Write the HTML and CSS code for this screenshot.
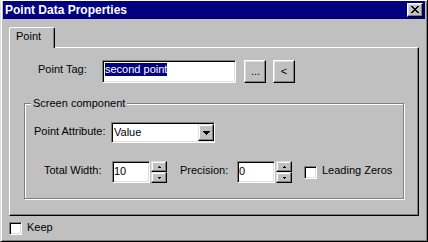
FILE: index.html
```html
<!DOCTYPE html>
<html>
<head>
<meta charset="utf-8">
<title>Point Data Properties</title>
<link rel="stylesheet" href="styles.css">
</head>
<body>
<div class="window">
	<div class="titlebar">
		<span class="title">Point Data Properties</span>
		<span class="close-btn">
			<svg width="8" height="7" viewBox="0 0 8 7">
				<rect x="0" y="0" width="2" height="1"/><rect x="6" y="0" width="2" height="1"/>
				<rect x="1" y="1" width="2" height="1"/><rect x="5" y="1" width="2" height="1"/>
				<rect x="2" y="2" width="4" height="1"/>
				<rect x="3" y="3" width="2" height="1"/>
				<rect x="2" y="4" width="4" height="1"/>
				<rect x="1" y="5" width="2" height="1"/><rect x="5" y="5" width="2" height="1"/>
				<rect x="0" y="6" width="2" height="1"/><rect x="6" y="6" width="2" height="1"/>
			</svg>
		</span>
	</div>
	<div class="client">
		<div class="tab">Point</div>
		<div class="panel">
			<div class="tag-row">
				<span class="lbl lbl-tag">Point Tag:</span>
				<div class="field field-tag"><span class="sel">second point</span></div>
				<span class="btn btn-browse">...</span>
				<span class="btn">&lt;</span>
			</div>
			<div class="group">
				<div class="group-title">Screen component</div>
				<div class="attr-row">
					<span class="lbl lbl-attr">Point Attribute:</span>
					<div class="combo">
						<span class="combo-text">Value</span>
						<span class="combo-btn">
							<svg width="7" height="4" viewBox="0 0 7 4">
								<rect x="0" y="0" width="7" height="1"/><rect x="1" y="1" width="5" height="1"/>
								<rect x="2" y="2" width="3" height="1"/><rect x="3" y="3" width="1" height="1"/>
							</svg>
						</span>
					</div>
				</div>
				<div class="spin-row">
					<span class="lbl lbl-width">Total Width:</span>
					<div class="field field-num">10</div>
					<div class="spin">
						<span class="spin-btn"><svg width="3" height="2" viewBox="0 0 3 2"><rect x="1" y="0" width="1" height="1"/><rect x="0" y="1" width="3" height="1"/></svg></span>
						<span class="spin-btn"><svg width="3" height="2" viewBox="0 0 3 2"><rect x="0" y="0" width="3" height="1"/><rect x="1" y="1" width="1" height="1"/></svg></span>
					</div>
					<span class="lbl lbl-prec">Precision:</span>
					<div class="field field-num">0</div>
					<div class="spin">
						<span class="spin-btn"><svg width="3" height="2" viewBox="0 0 3 2"><rect x="1" y="0" width="1" height="1"/><rect x="0" y="1" width="3" height="1"/></svg></span>
						<span class="spin-btn"><svg width="3" height="2" viewBox="0 0 3 2"><rect x="0" y="0" width="3" height="1"/><rect x="1" y="1" width="1" height="1"/></svg></span>
					</div>
					<span class="check check-zeros"></span>
					<span class="lbl">Leading Zeros</span>
				</div>
			</div>
		</div>
		<div class="keep-row">
			<span class="check"></span>
			<span class="lbl lbl-keep">Keep</span>
		</div>
	</div>
</div>
</body>
</html>
```

FILE: styles.css
```css
*{ margin:0; padding:0; box-sizing:border-box;}
html, body{ background:#c0c0c0;}
body{ font:11px/13px "Liberation Sans", Arial, sans-serif; color:#000;}
svg{ display:block; shape-rendering:crispEdges;}

/* window frame */
.window{ width:428px; height:242px; padding:1px 2px 2px; border-left:1px solid #dfdfdf; border-right:1px solid #000; border-bottom:1px solid #000; box-shadow:inset 1px 1px #fff, inset -1px -1px #808080;}
.titlebar{ display:flex; align-items:center; height:18px; padding:0 2px; background:#000080; color:#fff; font-weight:bold; font-size:12px;}
.title{ flex:1; line-height:18px; white-space:nowrap;}
.close-btn{ width:16px; height:14px; padding:2px 0 0 3px; background:#c0c0c0; border:1px solid; border-color:#fff #000 #000 #fff; box-shadow:inset -1px -1px #808080, inset 1px 1px #dfdfdf;}

.client{ padding:8px 6px 0;}

/* tab + page */
.tab{ position:relative; z-index:1; width:46px; height:21px; margin-bottom:-1px; padding:2px 0 0 6px; background:#c0c0c0; border:1px solid; border-bottom:0; border-color:#fff #000 #c0c0c0 #fff; border-radius:2px 2px 0 0; box-shadow:inset -1px 0 #808080;}
.panel{ height:169px; padding:12px 0 0 14px; border:1px solid; border-color:#fff #000 #000 #fff; box-shadow:inset -1px -1px #808080;}

.lbl{ flex:none; margin-top:3px; white-space:nowrap;}

.tag-row{ display:flex; align-items:flex-start; padding-left:14px;}
.lbl-tag{ width:64px;}

.field{ flex:none; background:#fff; border:1px solid; border-color:#808080 #fff #fff #808080; box-shadow:inset 1px 1px #000, inset -1px -1px #dfdfdf;}
.field-tag{ width:134px; height:23px; padding:2px; margin-right:8px;}
.sel{ display:inline-block; vertical-align:top; background:#000080; color:#fff;}

.btn{ flex:none; display:flex; align-items:center; justify-content:center; width:22px; height:23px; border:1px solid; border-color:#fff #000 #000 #fff; box-shadow:inset -1px -1px #808080, inset 1px 1px #dfdfdf;}
.btn-browse{ margin-right:7px; padding-left:1px;}

/* group box */
.group{ width:380px; height:96px; margin-top:20px; border:1px solid #808080; box-shadow:inset 1px 1px #fff, 1px 1px #fff;}
.group-title{ width:fit-content; margin:-7px 0 0 6px; padding:0 2px; background:#c0c0c0;}

.attr-row{ display:flex; align-items:flex-start; margin-top:12px; padding-left:9px;}
.lbl-attr{ width:77px;}
.combo{ flex:none; display:flex; width:104px; height:21px; padding:1px 0 1px 1px; background:#fff; border:1px solid; border-color:#808080 #fff #fff #808080; box-shadow:inset 1px 1px #000, inset -1px -1px #dfdfdf;}
.combo-text{ flex:1; padding:2px 0 0 1px;}
.combo-btn{ display:flex; align-items:center; justify-content:center; width:16px; height:17px; background:#c0c0c0; border:1px solid; border-color:#dfdfdf #000 #000 #dfdfdf; box-shadow:inset -1px -1px #808080, inset 1px 1px #fff;}

.spin-row{ display:flex; align-items:flex-start; margin-top:18px; padding-left:19px;}
.lbl-width{ width:68px;}
.lbl-prec{ width:57px; margin-left:13px;}
.field-num{ width:38px; height:22px; padding:3px 0 0 1px; margin-right:1px;}
.spin{ flex:none; display:flex; flex-direction:column; width:16px; height:22px;}
.spin-btn{ display:flex; align-items:center; justify-content:center; height:11px; border:1px solid; border-color:#dfdfdf #000 #000 #dfdfdf; box-shadow:inset -1px -1px #808080, inset 1px 1px #fff;}

.check{ flex:none; width:13px; height:13px; margin-right:5px; background:#fff; border:1px solid; border-color:#808080 #fff #fff #808080; box-shadow:inset 1px 1px #000, inset -1px -1px #dfdfdf;}
.check-zeros{ margin-top:5px; margin-left:12px;}

.keep-row{ display:flex; align-items:flex-start; margin-top:6px;}
.lbl-keep{ margin-top:-1px;}
```
